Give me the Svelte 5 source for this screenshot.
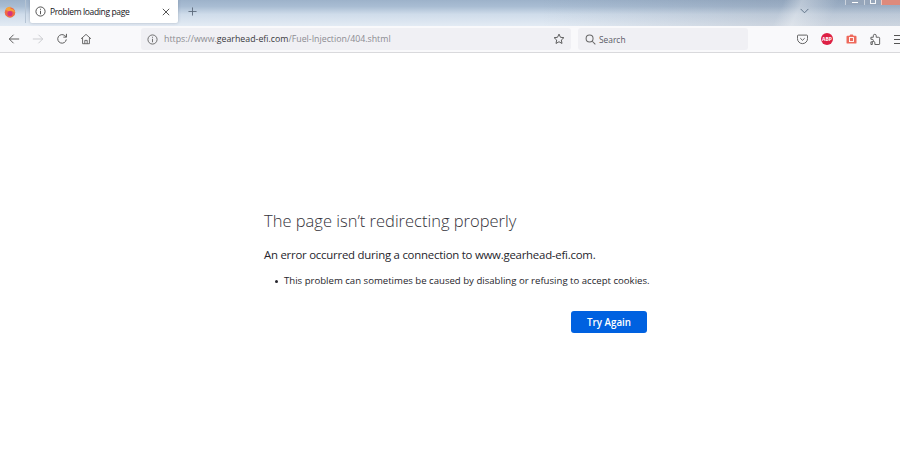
<script>
  const url = { pre: 'https://www.', host: 'gearhead-efi.com', path: '/Fuel-Injection/404.shtml' }
</script>

<div class="browser">
  <div class="titlebar">
    <div class="fx-slot">
      <svg width="12" height="12" viewBox="0 0 16 16">
        <circle cx="8" cy="8.5" r="7" fill="#ef6a45" />
        <path d="M2 5 C3 2 6 .8 9 1.2 C7.6 2.4 8.4 3.6 10.4 4 C13 4.6 14.6 7 15 9 C12 6.5 9 6 7 6.5 C5 7 3.4 6 2 5Z" fill="#f7a33c" />
        <circle cx="8" cy="10" r="3.4" fill="#d6357c" />
      </svg>
    </div>
    <div class="tab">
      <svg class="tab-info" width="11" height="11" viewBox="0 0 12 12" fill="none" stroke="#444" stroke-width="1">
        <circle cx="6" cy="6" r="5" />
        <path d="M6 5.2V9M6 3v1.1" />
      </svg>
      <span class="tab-title">Problem loading page</span>
      <svg class="tab-close" width="8" height="8" viewBox="0 0 8 8" stroke="#555" stroke-width="1">
        <path d="M.8.8l6.4 6.4M7.2.8L.8 7.2" />
      </svg>
    </div>
    <svg class="newtab" width="9" height="9" viewBox="0 0 10 10" stroke="#5c6a7a" stroke-width="1">
      <path d="M5 .5v9M.5 5h9" />
    </svg>
    <svg class="chevron" width="9" height="6" viewBox="0 0 10 6" fill="none" stroke="#566a80" stroke-width="1">
      <path d="M.7.7L5 5l4.3-4.3" />
    </svg>
    <div class="winctl">
      <span class="ctl min"></span>
      <span class="ctl max"></span>
      <span class="ctl close"></span>
    </div>
  </div>

  <div class="toolbar">
    <button class="nav first" aria-label="Back">
      <svg width="12" height="12" viewBox="0 0 14 14" fill="none" stroke="#555" stroke-width="1.1">
        <path d="M13 7H1.5M6.5 2L1.5 7l5 5" />
      </svg>
    </button>
    <button class="nav" aria-label="Forward">
      <svg width="12" height="12" viewBox="0 0 14 14" fill="none" stroke="#c8c9cd" stroke-width="1.1">
        <path d="M1 7h11.5M7.5 2l5 5-5 5" />
      </svg>
    </button>
    <button class="nav" aria-label="Reload">
      <svg width="12" height="12" viewBox="0 0 14 14" fill="none" stroke="#555" stroke-width="1.1">
        <path d="M12 7.5A5 5 0 1 1 10.2 3L12 4.6" />
        <path d="M12.2 1v3.8H8.6" />
      </svg>
    </button>
    <button class="nav" aria-label="Home">
      <svg width="12" height="12" viewBox="0 0 14 14" fill="none" stroke="#555" stroke-width="1">
        <path d="M1.2 6.8L7 1.6l5.8 5.2M3 5.6v6.9h8V5.6" />
        <path d="M5.6 12.5V8.6h2.8v3.9" />
      </svg>
    </button>

    <div class="urlbar">
      <svg class="url-info" width="11" height="11" viewBox="0 0 12 12" fill="none" stroke="#666" stroke-width="1">
        <circle cx="6" cy="6" r="5" />
        <path d="M6 5.2V9M6 3v1.1" />
      </svg>
      <span class="url"><span class="dim">{url.pre}</span>{url.host}<span class="dim">{url.path}</span></span>
      <svg class="star" width="12" height="12" viewBox="0 0 14 14" fill="none" stroke="#555" stroke-width="1.1">
        <path d="M7 1.3l1.7 3.7 4 .5-3 2.7.8 4L7 10.2l-3.5 2 .8-4-3-2.7 4-.5z" />
      </svg>
    </div>

    <div class="searchbar">
      <svg width="11" height="11" viewBox="0 0 12 12" fill="none" stroke="#666" stroke-width="1.1">
        <circle cx="5" cy="5" r="3.8" />
        <path d="M7.9 7.9l3.4 3.4" />
      </svg>
      <span class="search-label">Search</span>
    </div>

    <div class="actions">
      <svg width="11" height="11" viewBox="0 0 12 12" fill="none" stroke="#555" stroke-width="1">
        <path d="M1.5 1.2h9a1 1 0 0 1 1 1V5a5.5 5.5 0 0 1-11 0V2.2a1 1 0 0 1 1-1z" />
        <path d="M3.6 4.6L6 6.9l2.4-2.3" />
      </svg>
      <span class="abp">ABP</span>
      <svg width="11" height="10" viewBox="0 0 12 11">
        <path d="M1.5 2h2.3l.8-1.4h2.8L8.2 2h2.3a1 1 0 0 1 1 1v6.5a1 1 0 0 1-1 1h-9a1 1 0 0 1-1-1V3a1 1 0 0 1 1-1z" fill="#ee6a5c" />
        <rect x="3.8" y="3.9" width="4.4" height="4.4" fill="none" stroke="#fff" stroke-width="1" />
      </svg>
      <svg width="11" height="12" viewBox="0 0 12 13" fill="none" stroke="#555" stroke-width="1">
        <path d="M1 4.6h2.6V3a1.6 1.6 0 0 1 3.2 0v1.6h2.7a1 1 0 0 1 1 1v6.3a.6.6 0 0 1-.6.6H5.3v-1.9a1.4 1.4 0 0 0-2.8 0v1.9H1V9.6h1.3a1.4 1.4 0 0 0 0-2.8H1z" />
      </svg>
      <svg class="menu" width="12" height="9" viewBox="0 0 12 9" stroke="#555" stroke-width="1">
        <path d="M0 .5h12M0 4.5h12M0 8.5h12" />
      </svg>
    </div>
  </div>

  <main class="page">
    <div class="error">
      <h1>The page isn’t redirecting properly</h1>
      <p>An error occurred during a connection to www.gearhead-efi.com.</p>
      <ul>
        <li>This problem can sometimes be caused by disabling or refusing to accept cookies.</li>
      </ul>
      <div class="btn-row">
        <button class="retry">Try Again</button>
      </div>
    </div>
  </main>
</div>

<style>
  :global(body) {
    margin: 0;
    background: #fff;
    overflow: hidden;
  }
  .browser {
    height: 467px;
    display: flex;
    flex-direction: column;
    font-family: "Open Sans", "Noto Sans", sans-serif;
    color: #15141a;
  }

  .titlebar {
    height: 26px;
    display: flex;
    align-items: flex-start;
    overflow: hidden;
    background:
      linear-gradient(115deg, transparent 86%, rgba(255, 255, 255, 0.35) 88%, transparent 92%),
      linear-gradient(90deg, transparent 60%, rgba(90, 100, 120, 0.16) 85%),
      linear-gradient(180deg, #9db2ca 0%, #a9bdd3 25%, #cfdcea 55%, #e3ebf4 100%);
  }
  .fx-slot {
    width: 26px;
    height: 23px;
    margin-right: 4px;
    display: flex;
    align-items: center;
    justify-content: center;
    border-right: 1px solid #b5c4d4;
    box-sizing: border-box;
    padding-right: 5px;
  }
  .tab {
    width: 148px;
    height: 23px;
    box-sizing: border-box;
    padding: 0 8px 0 5px;
    display: flex;
    align-items: center;
    background: #fff;
    border-radius: 0 0 2px 2px;
    box-shadow: 0 0 3px rgba(60, 70, 90, 0.3);
  }
  .tab-title {
    margin-left: 4px;
    font-size: 8.5px;
    letter-spacing: -0.36px;
    white-space: nowrap;
    flex: 1;
  }
  .newtab {
    margin: 7px 0 0 10px;
  }
  .chevron {
    margin: 8px 0 0 603px;
  }
  .winctl {
    margin-left: auto;
    height: 5px;
    width: 55px;
    display: flex;
  }
  .ctl {
    background: rgba(150, 165, 185, 0.8);
    border-left: 1px solid rgba(255, 255, 255, 0.5);
    display: flex;
    justify-content: center;
    box-sizing: border-box;
  }
  .ctl.min {
    width: 19px;
  }
  .ctl.max {
    width: 17px;
  }
  .ctl.close {
    width: 19px;
    background: #dd8a7c;
  }
  .ctl.min::after {
    content: "";
    width: 6px;
    height: 1px;
    margin-top: 2px;
    background: #fff;
  }
  .ctl.max::after {
    content: "";
    width: 4px;
    height: 3px;
    border: 1px solid #f4f6f9;
    border-top: none;
  }

  .toolbar {
    height: 26px;
    display: flex;
    align-items: center;
    background: #f9f9fb;
    border-bottom: 1px solid #d9d9dc;
  }
  .nav {
    width: 12px;
    height: 12px;
    padding: 0;
    margin-left: 12px;
    border: none;
    background: none;
    display: flex;
  }
  .nav.first {
    margin-left: 8px;
  }
  .urlbar {
    width: 430px;
    height: 22px;
    margin-left: 49px;
    box-sizing: border-box;
    padding: 0 6px;
    display: flex;
    align-items: center;
    background: #f0f0f4;
    border-radius: 3px;
  }
  .url {
    margin-left: 6px;
    font-size: 8.8px;
    color: #3a3a40;
    flex: 1;
    white-space: nowrap;
  }
  .dim {
    color: #8c8c92;
  }
  .searchbar {
    width: 170px;
    height: 22px;
    margin-left: 7px;
    box-sizing: border-box;
    padding-left: 7px;
    display: flex;
    align-items: center;
    gap: 3px;
    background: #f0f0f4;
    border-radius: 3px;
    font-size: 8.4px;
    color: #5b5b66;
  }
  .search-label {
    padding-top: 1px;
  }
  .actions {
    margin-left: 49px;
    flex: 1;
    display: flex;
    align-items: center;
    gap: 13px;
    overflow: hidden;
  }
  .abp {
    width: 12px;
    height: 12px;
    border-radius: 50%;
    background: #dd2145;
    color: #fff;
    font-size: 5px;
    font-weight: 700;
    line-height: 12px;
    text-align: center;
    flex: none;
  }
  .actions svg {
    flex: none;
  }

  .page {
    flex: 1;
    background: #fff;
  }
  .error {
    width: 386px;
    margin: 156px 0 0 264px;
  }
  h1 {
    margin: 0;
    font-size: 16.5px;
    line-height: 23px;
    font-weight: 300;
    color: #33323a;
  }
  p {
    margin: 15px 0 0;
    font-size: 11.4px;
    letter-spacing: -0.23px;
    line-height: 16px;
    color: #26252c;
  }
  ul {
    margin: 11px 0 0;
    padding: 0 0 0 20px;
    list-style: none;
    font-size: 9.6px;
    line-height: 14px;
    white-space: nowrap;
    color: #26252c;
  }
  li::before {
    content: "";
    display: inline-block;
    width: 3px;
    height: 3px;
    margin: 0 6px 1.5px -9px;
    border-radius: 50%;
    background: #26252c;
  }
  .btn-row {
    margin-top: 23px;
    display: flex;
    justify-content: flex-end;
    padding-right: 3px;
  }
  .retry {
    width: 76px;
    height: 22px;
    border: none;
    border-radius: 3px;
    background: #0061e0;
    color: #fff;
    font: 600 9.8px "Open Sans", "Noto Sans", sans-serif;
  }
</style>
